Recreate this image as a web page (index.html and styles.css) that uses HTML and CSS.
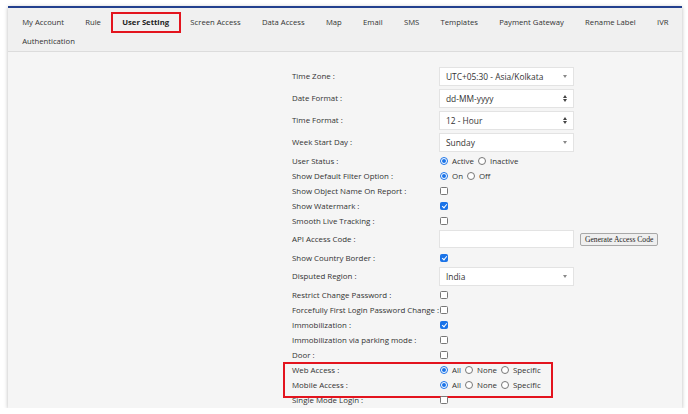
FILE: index.html
```html
<!DOCTYPE html>
<html>
<head>
<meta charset="utf-8">
<link rel="stylesheet" href="styles.css">
</head>
<body>
<div class="card">
  <nav class="tabs">
    <span class="tab">My Account</span>
    <span class="tab">Rule</span>
    <span class="tab active">User Setting</span>
    <span class="tab">Screen Access</span>
    <span class="tab">Data Access</span>
    <span class="tab">Map</span>
    <span class="tab">Email</span>
    <span class="tab">SMS</span>
    <span class="tab">Templates</span>
    <span class="tab">Payment Gateway</span>
    <span class="tab">Rename Label</span>
    <span class="tab">IVR</span>
    <span class="tab">Authentication</span>
  </nav>
  <div class="content">
    <div class="form">
      <div class="row tall"><span class="lbl">Time Zone :</span><div class="ctl"><div class="select">UTC+05:30 - Asia/Kolkata<span class="caret"></span></div></div></div>
      <div class="row tall"><span class="lbl">Date Format :</span><div class="ctl"><div class="select">dd-MM-yyyy<span class="updown"><i class="up"></i><i class="down"></i></span></div></div></div>
      <div class="row tall"><span class="lbl">Time Format :</span><div class="ctl"><div class="select">12 - Hour<span class="updown"><i class="up"></i><i class="down"></i></span></div></div></div>
      <div class="row tall"><span class="lbl">Week Start Day :</span><div class="ctl"><div class="select">Sunday<span class="caret"></span></div></div></div>
      <div class="row"><span class="lbl">User Status :</span><div class="ctl"><span class="radio on"></span><span class="opt">Active</span><span class="radio"></span><span class="opt">Inactive</span></div></div>
      <div class="row"><span class="lbl">Show Default Filter Option :</span><div class="ctl"><span class="radio on"></span><span class="opt">On</span><span class="radio"></span><span class="opt">Off</span></div></div>
      <div class="row"><span class="lbl">Show Object Name On Report :</span><div class="ctl"><span class="check"></span></div></div>
      <div class="row"><span class="lbl">Show Watermark :</span><div class="ctl"><span class="check on"></span></div></div>
      <div class="row"><span class="lbl">Smooth Live Tracking :</span><div class="ctl"><span class="check"></span></div></div>
      <div class="row tall"><span class="lbl">API Access Code :</span><div class="ctl"><div class="input"></div><span class="btn">Generate Access Code</span></div></div>
      <div class="row"><span class="lbl">Show Country Border :</span><div class="ctl"><span class="check on"></span></div></div>
      <div class="row tall"><span class="lbl">Disputed Region :</span><div class="ctl"><div class="select">India<span class="caret"></span></div></div></div>
      <div class="row"><span class="lbl">Restrict Change Password :</span><div class="ctl"><span class="check"></span></div></div>
      <div class="row"><span class="lbl">Forcefully First Login Password Change :</span><div class="ctl"><span class="check"></span></div></div>
      <div class="row"><span class="lbl">Immobilization :</span><div class="ctl"><span class="check on"></span></div></div>
      <div class="row"><span class="lbl">Immobilization via parking mode :</span><div class="ctl"><span class="check"></span></div></div>
      <div class="row"><span class="lbl">Door :</span><div class="ctl"><span class="check"></span></div></div>
      <div class="marked">
        <div class="row"><span class="lbl">Web Access :</span><div class="ctl"><span class="radio on"></span><span class="opt">All</span><span class="radio"></span><span class="opt">None</span><span class="radio"></span><span class="opt">Specific</span></div></div>
        <div class="row"><span class="lbl">Mobile Access :</span><div class="ctl"><span class="radio on"></span><span class="opt">All</span><span class="radio"></span><span class="opt">None</span><span class="radio"></span><span class="opt">Specific</span></div></div>
      </div>
      <div class="row"><span class="lbl">Single Mode Login :</span><div class="ctl"><span class="check"></span></div></div>
    </div>
  </div>
</div>
</body>
</html>
```
FILE: styles.css
```css
* { box-sizing: border-box; }
html, body { margin: 0; padding: 0; background: #ffffff; }
body { font-family: "Open Sans", "Liberation Sans", sans-serif; color: #333; }

.card {
  margin: 6px 6px 0 8px;
  height: 402px;
  border-top: 2px solid #23408e;
  background: #f4f4f4;
  box-shadow: 0 1px 4px rgba(0,0,0,0.28);
  overflow: hidden;
  display: flex;
  flex-direction: column;
}

.tabs {
  display: flex;
  flex-wrap: wrap;
  padding: 5px 0 0 3.5px;
  background: #f0f0f0;
  border-bottom: 1px solid #dcdcdc;
}
.tab {
  font-size: 7.7px;
  line-height: 19px;
  padding: 0 10.65px;
  color: #333;
  white-space: nowrap;
}
.tab.active {
  font-weight: 700;
  color: #222;
  outline: 2px solid #e3141e;
  outline-offset: -1px;
}

.content {
  flex: 1;
  padding: 13px 0 0 284px;
  background: #f5f5f5;
}

.form { width: 380px; }
.row {
  display: grid;
  grid-template-columns: 147px auto;
  align-items: center;
  height: 15px;
  font-size: 7.9px;
}
.row.tall { height: 22px; }
.lbl { color: #333; white-space: nowrap; }
.ctl { display: flex; align-items: center; }

.select {
  position: relative;
  width: 135px;
  height: 19px;
  background: #fff;
  border: 1px solid #e3e3e3;
  font-size: 8.4px;
  line-height: 17px;
  padding-left: 6px;
  color: #333;
}
.caret {
  position: absolute;
  right: 6px;
  top: 7px;
  width: 0; height: 0;
  border-left: 2.5px solid transparent;
  border-right: 2.5px solid transparent;
  border-top: 3px solid #888;
}
.updown {
  position: absolute;
  right: 6px;
  top: 5px;
  display: flex;
  flex-direction: column;
  gap: 1px;
}
.updown i {
  display: block;
  width: 0; height: 0;
  border-left: 2.5px solid transparent;
  border-right: 2.5px solid transparent;
}
.updown .up { border-bottom: 3px solid #444; }
.updown .down { border-top: 3px solid #444; }

.input {
  width: 135px;
  height: 18px;
  background: #fff;
  border: 1px solid #e3e3e3;
}
.btn {
  margin-left: 6px;
  font-family: "Liberation Serif", "DejaVu Serif", serif;
  font-size: 7.6px;
  line-height: 11px;
  padding: 0 4px;
  border: 1px solid #a8a8a8;
  border-radius: 2px;
  background: #efefef;
  color: #222;
}

.radio {
  width: 8px; height: 8px;
  border-radius: 50%;
  border: 1px solid #777;
  background: #fff;
  margin-left: 1px;
  margin-right: 4px;
  position: relative;
}
.radio.on { border-color: #1a73e8; }
.radio.on::after {
  content: "";
  position: absolute;
  left: 1px; top: 1px;
  width: 4px; height: 4px;
  border-radius: 50%;
  background: #1a73e8;
}
.opt { margin-right: 3px; }

.check {
  width: 8px; height: 8px;
  border: 1px solid #777;
  border-radius: 1.5px;
  background: #fff;
  margin-left: 1px;
  position: relative;
}
.check.on { background: #1a73e8; border-color: #1a73e8; }
.check.on::after {
  content: "";
  position: absolute;
  left: 2px; top: 0px;
  width: 2px; height: 4px;
  border-right: 1.3px solid #fff;
  border-bottom: 1.3px solid #fff;
  transform: rotate(40deg);
}

.marked { position: relative; }
.marked::after {
  content: "";
  position: absolute;
  left: -9px;
  top: 0;
  width: 266px;
  height: 32px;
  border: 2px solid #e3141e;
  pointer-events: none;
}
```
